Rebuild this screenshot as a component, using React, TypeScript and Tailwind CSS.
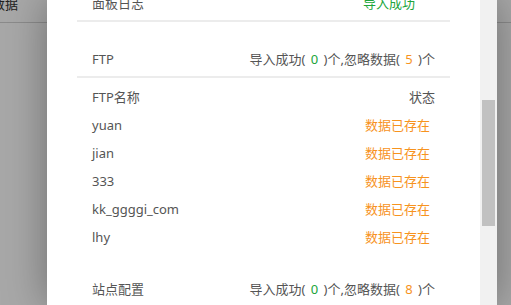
const ftpRows = ['yuan', 'jian', '333', 'kk_ggggi_com', 'lhy'];

function Summary({ ok, skip }: { ok: number; skip: number }) {
  return (
    <span>
      导入成功( <span className="mx-[2px] text-[#20a53a]">{ok}</span> )个,忽略数据({' '}
      <span className="mx-[2px] text-[#f7931e]">{skip}</span> )个
    </span>
  );
}

function SectionHead({ title, children }: { title: string; children: React.ReactNode }) {
  return (
    <div className="flex h-[36px] items-center justify-between border-b-2 border-[#ececec] px-[15px] pt-[2px]">
      <span>{title}</span>
      {children}
    </div>
  );
}

export default function App() {
  return (
    <div
      className="relative h-[305px] w-[511px] overflow-hidden bg-white text-[13px] text-[#555]"
      style={{ fontFamily: '"Noto Sans", "Noto Sans CJK SC", sans-serif' }}
    >
      {/* page behind the dialog */}
      <div className="flex h-[23px] items-start border-b border-[#d4d4d4]">
        <span className="-ml-[8px] -mt-[4px] leading-[16px] text-[#333]">数据</span>
      </div>

      <div className="absolute inset-0 bg-black/[0.34]" />

      <div className="absolute left-[47px] top-0 flex h-full w-[450px] bg-white shadow-[0_0_40px_rgba(0,0,0,0.35)]">
        <div className="w-[433px] overflow-hidden px-[30px]">
          <div className="-mt-[14px]">
            <SectionHead title="面板日志">
              <span className="pr-[20px] text-[#20a53a]">导入成功</span>
            </SectionHead>

            <div className="mt-5">
              <SectionHead title="FTP">
                <Summary ok={0} skip={5} />
              </SectionHead>
              <div className="pb-[1px] pt-[5px]">
                <div className="flex h-[28px] items-center justify-between px-[15px] pt-[1px]">
                  <span>FTP名称</span>
                  <span>状态</span>
                </div>
                {ftpRows.map((name) => (
                  <div key={name} className="flex h-[28px] items-center justify-between px-[15px] pt-[1px]">
                    <span>{name}</span>
                    <span className="pr-[5px] text-[#f7931e]">数据已存在</span>
                  </div>
                ))}
              </div>
            </div>

            <div className="mt-5">
              <SectionHead title="站点配置">
                <Summary ok={0} skip={8} />
              </SectionHead>
            </div>
          </div>
        </div>

        <div className="w-[17px] bg-[#f1f1f1] px-[2px] pt-[100px]">
          <div className="h-[126px] bg-[#c1c1c1]" />
        </div>
      </div>
    </div>
  );
}
